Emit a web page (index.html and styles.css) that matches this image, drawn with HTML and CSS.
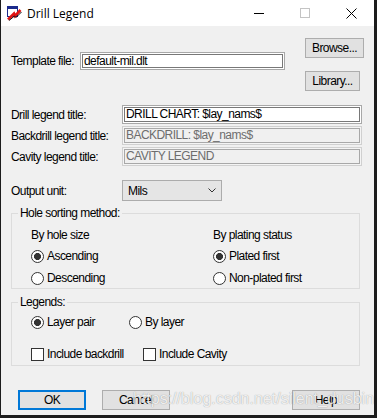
FILE: index.html
```html
<!DOCTYPE html>
<html lang="en">
<head>
    <meta charset="UTF-8">
    <meta name="viewport" content="width=device-width, initial-scale=1.0">
    <title>Drill Legend</title>
    <link rel="stylesheet" href="styles.css">
</head>
<body>
    <div class="window">
        <div class="titlebar">
            <svg class="app-icon" width="16" height="16" viewBox="0 0 16 16">
                <rect x="1.5" y="1.5" width="10" height="10" fill="#fff" stroke="#1b2a8c"/>
                <rect x="2" y="2" width="9" height="2" fill="#1b2a8c"/>
                <path d="M2 14.5 L8 8.5 L9 11 L14.5 5" stroke="#e01414" stroke-width="2.6" fill="none"/>
                <path d="M3 15.5 L8.5 11 L10 12.5 L15.5 7" stroke="#111" stroke-width="1" fill="none"/>
            </svg>
            <span class="title">Drill Legend</span>
            <div class="caption-btns">
                <span class="cap-btn"><svg width="10" height="10"><path d="M0 5.5 H10" stroke="#000"/></svg></span>
                <span class="cap-btn"><svg width="10" height="10"><rect x="0.5" y="0.5" width="9" height="9" fill="none" stroke="#c4c4c4"/></svg></span>
                <span class="cap-btn"><svg width="11" height="11"><path d="M0.5 0.5 L10.5 10.5 M10.5 0.5 L0.5 10.5" stroke="#000"/></svg></span>
            </div>
        </div>

        <div class="client">
            <div class="top">
                <div class="tpl-row">
                    <span class="lbl tpl-lbl">Template file:</span>
                    <div class="field tpl-field">default-mil.dlt</div>
                </div>
                <div class="side-btns">
                    <button class="btn browse">Browse...</button>
                    <button class="btn library">Library...</button>
                </div>
            </div>

            <div class="titles">
                <span class="lbl">Drill legend title:</span>
                <div class="field wide">DRILL CHART: $lay_nams$</div>
                <span class="lbl">Backdrill legend title:</span>
                <div class="field wide disabled">BACKDRILL: $lay_nams$</div>
                <span class="lbl">Cavity legend title:</span>
                <div class="field wide disabled">CAVITY LEGEND</div>
            </div>

            <div class="unit-row">
                <span class="lbl">Output unit:</span>
                <div class="select">
                    <span>Mils</span>
                    <svg width="8" height="5"><path d="M0.5 0.5 L4 4 L7.5 0.5" stroke="#333" fill="none"/></svg>
                </div>
            </div>

            <fieldset class="group sorting">
                <legend>Hole sorting method:</legend>
                <div class="sort-cols">
                    <div class="col">
                        <div class="sub">By hole size</div>
                        <div class="radio on"><i></i>Ascending</div>
                        <div class="radio"><i></i>Descending</div>
                    </div>
                    <div class="col">
                        <div class="sub">By plating status</div>
                        <div class="radio on"><i></i>Plated first</div>
                        <div class="radio"><i></i>Non-plated first</div>
                    </div>
                </div>
            </fieldset>

            <fieldset class="group legends">
                <legend>Legends:</legend>
                <div class="opt-row radios">
                    <div class="radio on"><i></i>Layer pair</div>
                    <div class="radio"><i></i>By layer</div>
                </div>
                <div class="opt-row checks">
                    <div class="check"><i></i>Include backdrill</div>
                    <div class="check"><i></i>Include Cavity</div>
                </div>
            </fieldset>

            <div class="actions">
                <button class="btn ok">OK</button>
                <button class="btn">Cancel</button>
                <button class="btn help">Help</button>
            </div>
        </div>

        <div class="watermark">https://blog.csdn.net/silent_dusbin</div>
    </div>
</body>
</html>
```

FILE: styles.css
```css
body {
    margin: 0;
    background: #1c1c1c;
    font-family: "Liberation Sans", Arial, sans-serif;
    font-size: 12px;
    letter-spacing: -0.55px;
    color: #000;
}

.window {
    position: relative;
    width: 373px;
    height: 415px;
    margin-left: 1px;
    background: #f0f0f0;
    overflow: hidden;
}

/* title bar */
.titlebar { height: 26px; background: #fff; display: flex; align-items: center; letter-spacing: 0; }
.app-icon { margin-left: 5px; }
.title { margin-left: 5px; font-family: "Open Sans", sans-serif; font-size: 12px; }
.caption-btns { margin-left: auto; display: flex; }
.cap-btn { width: 46px; height: 26px; display: flex; align-items: center; justify-content: center; }

/* client area */
.client { padding: 12px 0 0 10px; }
.lbl { line-height: 14px; white-space: nowrap; }

.top { display: flex; align-items: flex-start; }
.tpl-row { display: flex; align-items: center; margin-top: 14px; }
.tpl-lbl { width: 69px; }
.side-btns { margin-left: 20px; display: flex; flex-direction: column; align-items: flex-start; gap: 13px; }

.field {
    box-sizing: border-box;
    height: 18px;
    padding: 0 3px;
    line-height: 16px;
    background: #fff;
    border: 1px solid #a8a8a8;
    box-shadow: inset 0 0 0 1px #fff, inset 0 0 0 2px #787878;
    white-space: nowrap;
    overflow: hidden;
}
.tpl-field { width: 205px; }
.wide { width: 240px; height: 19px; line-height: 17px; }
.field.disabled {
    background: #f0f0f0;
    color: #6d6d6d;
    border-color: #d0d0d0;
    box-shadow: inset 0 0 0 1px #f4f4f4, inset 0 0 0 2px #a8a8a8;
}

.titles, .unit-row {
    display: grid;
    grid-template-columns: 111px 240px;
    align-items: center;
    row-gap: 2px;
    margin-top: 14px;
}

.select {
    box-sizing: border-box;
    width: 100px;
    height: 21px;
    padding: 0 5px 0 5px;
    display: flex;
    align-items: center;
    justify-content: space-between;
    background: #e5e5e5;
    border: 1px solid #acacac;
}

.btn {
    box-sizing: border-box;
    height: 20px;
    padding: 0;
    font: inherit;
    letter-spacing: inherit;
    color: #000;
    background: #e1e1e1;
    border: 1px solid #adadad;
}
.browse { width: 59px; }
.library { width: 55px; }

/* group boxes */
.group {
    box-sizing: border-box;
    width: 349px;
    margin: 0;
    padding: 0;
    min-width: 0;
    border: 1px solid #dcdcdc;
}
.group legend { margin-left: 6px; padding: 0 2px; line-height: 13px; }
.sorting { margin-top: 6px; }
.legends { margin-top: 7px; }

.sort-cols { display: grid; grid-template-columns: 182px 1fr; padding: 8px 0 2px 19px; }
.sub { line-height: 14px; margin-bottom: 6px; }
.col .radio + .radio { margin-top: 6px; }

.radio, .check { display: flex; align-items: center; height: 16px; white-space: nowrap; }
.radio i, .check i {
    box-sizing: border-box;
    width: 13px;
    height: 13px;
    margin-right: 3px;
    background: #fff;
    border: 1px solid #333;
}
.radio i { border-radius: 50%; }
.radio.on i { background: radial-gradient(circle, #333 0 3.2px, #fff 3.8px); }

.opt-row { display: flex; padding-left: 19px; }
.radios { padding-top: 5px; }
.radios .radio:first-child { width: 98px; }
.checks { padding-top: 16px; padding-bottom: 3px; }
.checks .check:first-child { width: 112px; }

/* bottom buttons */
.actions { display: flex; width: 349px; margin-top: 24px; }
.actions .btn { width: 68px; }
.ok { margin-left: 7px; margin-right: 16px; border: 2px solid #0078d7; }
.help { margin-left: auto; }

.watermark {
    position: absolute;
    left: 132px;
    top: 389px;
    font-family: "Liberation Sans", Arial, sans-serif;
    font-size: 16px;
    line-height: 20px;
    letter-spacing: 0;
    color: rgba(255, 255, 255, 0.85);
    text-shadow: 0 0 1px rgba(0, 0, 0, 0.4);
    white-space: nowrap;
    pointer-events: none;
}
```
